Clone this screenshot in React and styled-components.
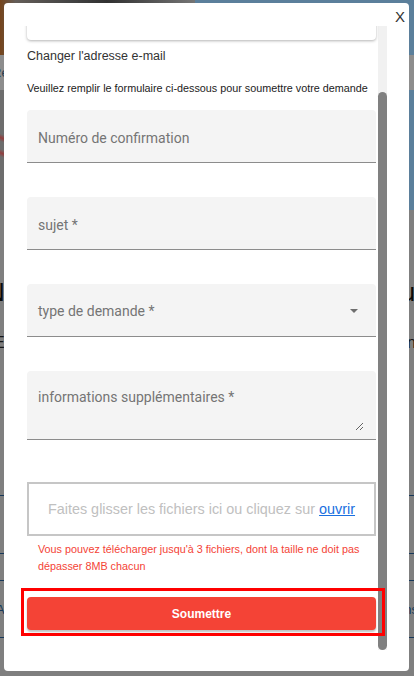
import { useLayoutEffect, useRef, useState } from "react";
import styled, { createGlobalStyle } from "styled-components";

const GlobalStyle = createGlobalStyle`
  html, body {
    margin: 0;
    padding: 0;
    font-family: Roboto, "Liberation Sans", Arial, sans-serif;
  }
  * {
    box-sizing: border-box;
  }
`;

/* ---------- page behind the dialog ---------- */

const Page = styled.div`
  min-height: 100vh;
  background: #c4c4c4;
  overflow: hidden;
`;
const Hero = styled.div`
  display: grid;
  grid-template-columns: 195px 1fr;
  height: 55px;
`;
const Photo = styled.div`
  background: linear-gradient(
    90deg,
    #b56a2c 0%,
    #9a9088 8%,
    #6a6a6a 35%,
    #4c4c4c 55%,
    #b4b4b4 100%
  );
`;
const Sky = styled.div`
  background: #8dc3ee;
`;
const NavBand = styled.div`
  height: 35px;
  background: #d9d9d9;
  display: flex;
  align-items: center;
  font-family: "Liberation Sans", Arial, sans-serif;
  font-size: 13px;
  color: #3d5c7c;
  white-space: nowrap;
  margin-left: -8px;
`;
const Banner = styled.div`
  display: grid;
  grid-template-columns: 195px 1fr;
  height: 120px;
`;
const BannerPhoto = styled.div`
  background: linear-gradient(
      200deg,
      transparent 60%,
      #e06060 62%,
      transparent 64%,
      transparent 68%,
      #e06060 70%,
      transparent 72%
    ),
    #a8a8a8;
`;
const Main = styled.div`
  padding-top: 66px;
  font-family: "Liberation Sans", Arial, sans-serif;
`;
const Headline = styled.h1`
  margin: 0 0 0 -14px;
  width: 460px;
  font-size: 26px;
  line-height: 32px;
  font-weight: 400;
  color: #111;
  white-space: nowrap;
  text-align-last: justify;
`;
const Lead = styled.p`
  margin: 23px 0 0 -6px;
  width: 430px;
  font-size: 16px;
  line-height: 24px;
  color: #222;
  white-space: nowrap;
  text-align-last: justify;
`;
const LinkTable = styled.div`
  margin-top: 140px;
  border-top: 1px solid #24578a;
`;
const LinkRow = styled.div`
  height: ${(p) => p.$h}px;
  border-bottom: 1px solid #24578a;
  display: flex;
  align-items: center;
  justify-content: space-between;
  margin: 0 -4px;
  font-size: 13px;
  color: #24578a;
`;

/* ---------- dialog ---------- */

const Backdrop = styled.div`
  position: fixed;
  inset: 0;
  background: rgba(0, 0, 0, 0.35);
  display: flex;
  align-items: flex-start;
  padding: 3px 5px 0 4px;
`;
const Dialog = styled.div`
  position: relative;
  width: 405px;
  height: 668px;
  background: #fff;
  border-radius: 4px;
  padding: 23px 18px 21px 14px;
`;
const CloseButton = styled.button`
  position: absolute;
  top: 5px;
  right: 4px;
  border: none;
  background: none;
  padding: 0;
  font-family: "Liberation Sans", Arial, sans-serif;
  font-size: 15px;
  line-height: 17px;
  color: #333;
  cursor: pointer;
`;
const Scroller = styled.div`
  position: relative;
  z-index: 1;
  width: 369px;
  height: 624px;
  overflow-y: scroll;
  overflow-x: hidden;
  scrollbar-width: none;

  &::-webkit-scrollbar {
    display: none;
  }
`;
const Track = styled.div`
  position: absolute;
  top: 23px;
  left: 374px;
  width: 9px;
  height: 624px;
  background: #f1f1f1;
`;
const Thumb = styled.div`
  width: 9px;
  border-radius: 5px;
  background: #808080;
`;
const Content = styled.div`
  padding: 4px 11px 14px 9px;
  display: flex;
  flex-direction: column;
`;
const EmailCard = styled.div`
  height: 84px;
  border-radius: 4px;
  background: #fff;
  box-shadow: 0 1px 3px rgba(0, 0, 0, 0.3);
  padding: 16px 12px;
  font-size: 13px;
  color: #333;
`;
const CardLabel = styled.div`
  font-size: 11px;
  color: #777;
  margin-bottom: 6px;
`;
const SectionTitle = styled.div`
  margin-top: 8px;
  font-family: "Liberation Sans", Arial, sans-serif;
  font-size: 12.5px;
  line-height: 16px;
  color: #333;
`;
const Intro = styled.div`
  margin-top: 18px;
  font-family: "Liberation Sans", Arial, sans-serif;
  font-size: 10.8px;
  line-height: 13px;
  color: #222;
  white-space: nowrap;
`;
const Form = styled.form`
  display: flex;
  flex-direction: column;
  margin-top: 15px;
`;
const Field = styled.div`
  display: flex;
  align-items: flex-start;
  margin-bottom: 34px;
  background: #f4f4f4;
  border-radius: 4px 4px 0 0;
  border-bottom: 1px solid #8c8c8c;
  padding: ${(p) => (p.$multiline ? "18px 12px 8px 11px" : "0 11px")};
`;
const Input = styled.input`
  width: 100%;
  height: 52px;
  border: none;
  background: transparent;
  padding: 19px 0 16px;
  font-family: Roboto, "Liberation Sans", Arial, sans-serif;
  font-size: 14px;
  line-height: 17px;
  color: #222;
  outline: none;

  &::placeholder {
    color: #757575;
  }
`;
const SelectValue = styled.div`
  flex: 1;
  height: 52px;
  padding-top: 19px;
  font-size: 14px;
  line-height: 17px;
  color: #757575;
`;
const Caret = styled.svg`
  margin: 25px 7px 0 0;
  width: 8px;
  height: 4px;
`;
const TextArea = styled.textarea`
  width: 100%;
  height: 42px;
  border: none;
  background: transparent;
  padding: 0;
  resize: vertical;
  font-family: Roboto, "Liberation Sans", Arial, sans-serif;
  font-size: 14px;
  line-height: 17px;
  color: #222;
  outline: none;

  &::placeholder {
    color: #757575;
  }
`;
const DropZone = styled.div`
  height: 54px;
  border: 2px solid #c6c6c6;
  display: flex;
  align-items: center;
  justify-content: center;
  font-family: "Liberation Sans", Arial, sans-serif;
  font-size: 14.4px;
  color: #c0c0c0;
  margin-top: 8px;
  white-space: nowrap;
`;
const OpenLink = styled.a`
  margin-left: 4px;
  color: #1a6fe0;
  text-decoration: underline;
`;
const Hint = styled.p`
  margin: 5px 0 0;
  padding: 0 12px 0 11px;
  font-family: "Liberation Sans", Arial, sans-serif;
  font-size: 10.8px;
  line-height: 17px;
  color: #f44336;
`;
const Highlight = styled.div`
  margin: 13px -9px 0 -6px;
  border: 3px solid #ff0000;
  padding: 6px 6px 3px 3px;
`;
const SubmitButton = styled.button`
  display: block;
  width: 100%;
  height: 33px;
  border: none;
  border-radius: 4px;
  background: #f44336;
  box-shadow: 0 2px 2px rgba(0, 0, 0, 0.25);
  font-family: "Liberation Sans", Arial, sans-serif;
  font-size: 12px;
  font-weight: 700;
  color: #fff;
  cursor: pointer;
`;

const TRACK_HEIGHT = 624;

const App = () => {
  const scrollRef = useRef(null);
  const [thumb, setThumb] = useState({ top: 0, height: TRACK_HEIGHT });

  const measure = () => {
    const el = scrollRef.current;
    if (!el) return;
    const ratio = TRACK_HEIGHT / el.scrollHeight;
    setThumb({
      top: el.scrollTop * ratio,
      height: el.clientHeight * ratio,
    });
  };

  useLayoutEffect(() => {
    const el = scrollRef.current;
    if (el) el.scrollTop = el.scrollHeight;
    measure();
  }, []);

  return (
    <>
      <GlobalStyle />
      <Page>
        <Hero>
          <Photo />
          <Sky />
        </Hero>
        <NavBand>Réservations</NavBand>
        <Banner>
          <BannerPhoto />
          <Sky />
        </Banner>
        <Main>
          <Headline>Nous sommes là pour vous aider, toujours</Headline>
          <Lead>Envoyez-nous votre demande et nous vous répondrons</Lead>
          <LinkTable>
            <LinkRow $h={58} />
            <LinkRow $h={27} />
            <LinkRow $h={57}>
              <span>Aide</span>
              <span>Questions</span>
            </LinkRow>
          </LinkTable>
        </Main>
      </Page>

      <Backdrop>
        <Dialog>
          <CloseButton aria-label="Fermer">X</CloseButton>
          <Track>
            <Thumb style={{ marginTop: thumb.top, height: thumb.height }} />
          </Track>
          <Scroller ref={scrollRef} onScroll={measure}>
            <Content>
              <EmailCard>
                <CardLabel>Adresse e-mail</CardLabel>
                client@exemple.fr
              </EmailCard>
              <SectionTitle>Changer l'adresse e-mail</SectionTitle>
              <Intro>
                Veuillez remplir le formulaire ci-dessous pour soumettre votre
                demande
              </Intro>
              <Form onSubmit={(e) => e.preventDefault()}>
                <Field>
                  <Input placeholder="Numéro de confirmation" />
                </Field>
                <Field>
                  <Input placeholder="sujet *" />
                </Field>
                <Field>
                  <SelectValue>type de demande *</SelectValue>
                  <Caret viewBox="0 0 8 4">
                    <path d="M0 0h8L4 4z" fill="#6e6e6e" />
                  </Caret>
                </Field>
                <Field $multiline>
                  <TextArea placeholder="informations supplémentaires *" />
                </Field>
                <DropZone>
                  Faites glisser les fichiers ici ou cliquez sur
                  <OpenLink href="#">ouvrir</OpenLink>
                </DropZone>
                <Hint>
                  Vous pouvez télécharger jusqu'à 3 fichiers, dont la taille ne
                  doit pas dépasser 8MB chacun
                </Hint>
                <Highlight>
                  <SubmitButton type="submit">Soumettre</SubmitButton>
                </Highlight>
              </Form>
            </Content>
          </Scroller>
        </Dialog>
      </Backdrop>
    </>
  );
};

export default App;
